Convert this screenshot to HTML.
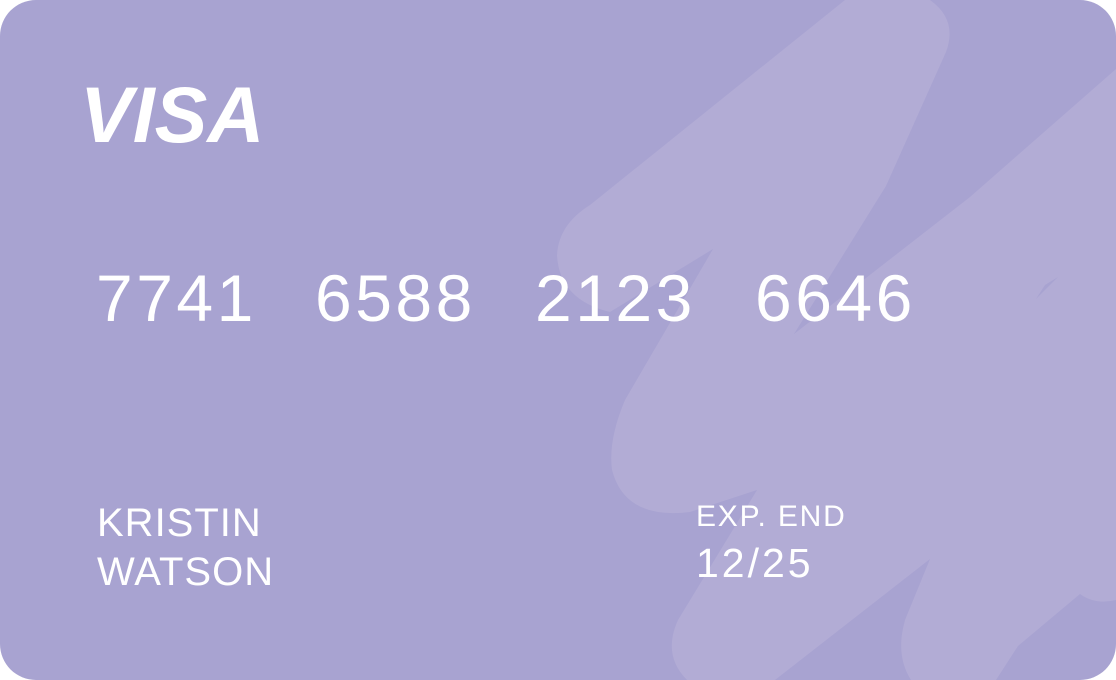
<!DOCTYPE html>
<html><head><meta charset="utf-8"><style>
html,body{margin:0;padding:0;background:#fff;}
.card{position:relative;width:1116px;height:680px;border-radius:36px;overflow:hidden;background:#a8a3d1;font-family:"Liberation Sans",sans-serif;color:#fff;}
svg{position:absolute;left:0;top:0;}
.t{position:absolute;white-space:nowrap;line-height:1;}
.num{font-size:66px;top:265px;letter-spacing:3.5px;}
</style></head><body>
<div class="card">
<svg width="1116" height="680" viewBox="0 0 1116 680">
<path fill="#b2acd5" d="M845,0 L930,0 Q958,20 946,52 L886,186 L794,334 L970,197 L1116,69 L1116,600 Q1095,605 1080,594 L1018,646 L996,680 L911,680 Q895,655 905,620 L930,559 L775,680 L687,680 Q662,655 678,620 L757,490 L690,512 Q625,520 612,470 Q608,440 625,400 L713,249 L610,312 Q560,300 557,256 Q558,225 590,205 Z"/>
<path fill="#a8a3d1" d="M1058,277 L1036,299 L1045,285 Z"/>
</svg>
<div class="t" style="left:80px;top:75px;font-size:79px;font-weight:bold;font-style:italic;letter-spacing:0px;">VISA</div>
<div class="t num" style="left:96px">7741</div>
<div class="t num" style="left:315px">6588</div>
<div class="t num" style="left:535px">2123</div>
<div class="t num" style="left:755px">6646</div>
<div class="t" style="left:97px;top:499px;font-size:40px;letter-spacing:1px;line-height:49px;">KRISTIN<br>WATSON</div>
<div class="t" style="left:696px;top:502px;font-size:30px;letter-spacing:1.8px;">EXP. END</div>
<div class="t" style="left:696px;top:543px;font-size:41px;letter-spacing:3px;">12/25</div>
</div>
</body></html>
